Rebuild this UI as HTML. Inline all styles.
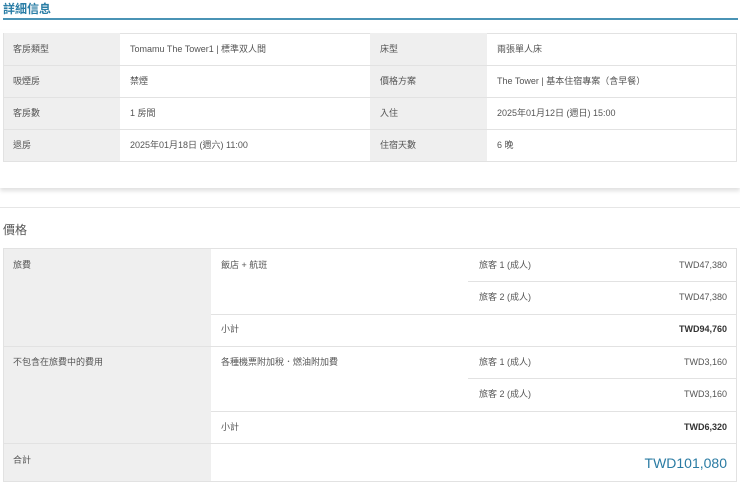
<!DOCTYPE html>
<html><head><meta charset="utf-8"><style>
body{margin:0;width:740px;height:485px;background:#fff;font-family:"Liberation Sans","Noto Sans CJK TC",sans-serif;font-size:9px;color:#555;position:relative;overflow:hidden}
div{position:absolute;box-sizing:border-box}
.g{background:#efefef}
.h{height:1px;background:#e2e2e2}
.v{width:1px;background:#e2e2e2}
.t{white-space:nowrap;line-height:11px}
.r{text-align:right}
</style></head><body>
<div class="t" style="left:3px;top:2px;font-size:12px;line-height:14px;color:#2b7ea6;font-weight:bold">詳細信息</div>
<div style="left:3px;top:18px;width:735px;height:2px;background:#4a93b5"></div>
<!-- card -->
<div style="left:0;top:30px;width:740px;height:158px;background:#fff;box-shadow:0 3px 4px rgba(0,0,0,0.12)"></div>
<div style="left:3px;top:33px;width:734px;height:129px;border:1px solid #e2e2e2;background:#fff"></div>
<div class="g" style="left:4px;top:33px;width:116px;height:129px"></div>
<div class="g" style="left:370px;top:33px;width:117px;height:129px"></div>
<div class="h" style="left:3px;top:65px;width:734px"></div>
<div class="h" style="left:3px;top:97px;width:734px"></div>
<div class="h" style="left:3px;top:129px;width:734px"></div>
<div class="h" style="left:3px;top:161px;width:734px"></div>
<div class="t" style="left:13px;top:44px">客房類型</div>
<div class="t" style="left:130px;top:44px">Tomamu The Tower1 | 標準双人間</div>
<div class="t" style="left:380px;top:44px">床型</div>
<div class="t" style="left:497px;top:44px">兩張單人床</div>
<div class="t" style="left:13px;top:76px">吸煙房</div>
<div class="t" style="left:130px;top:76px">禁煙</div>
<div class="t" style="left:380px;top:76px">價格方案</div>
<div class="t" style="left:497px;top:76px">The Tower | 基本住宿專案（含早餐）</div>
<div class="t" style="left:13px;top:108px">客房數</div>
<div class="t" style="left:130px;top:108px">1 房間</div>
<div class="t" style="left:380px;top:108px">入住</div>
<div class="t" style="left:497px;top:108px">2025年01月12日 (週日) 15:00</div>
<div class="t" style="left:13px;top:140px">退房</div>
<div class="t" style="left:130px;top:140px">2025年01月18日 (週六) 11:00</div>
<div class="t" style="left:380px;top:140px">住宿天數</div>
<div class="t" style="left:497px;top:140px">6 晚</div>
<div class="h" style="left:0;top:207px;width:740px;background:#e6e6e6"></div>
<div class="t" style="left:3px;top:223px;font-size:12px;line-height:14px;color:#555">價格</div>
<!-- price table -->
<div style="left:3px;top:248px;width:734px;height:234px;border:1px solid #e2e2e2"></div>
<div class="g" style="left:4px;top:249px;width:207px;height:232px"></div>
<div class="h" style="left:468px;top:281px;width:269px"></div>
<div class="h" style="left:211px;top:314px;width:526px"></div>
<div class="h" style="left:3px;top:346px;width:734px"></div>
<div class="h" style="left:468px;top:378px;width:269px"></div>
<div class="h" style="left:211px;top:411px;width:526px"></div>
<div class="h" style="left:3px;top:443px;width:734px"></div>
<div class="t" style="left:13px;top:260px">旅費</div>
<div class="t" style="left:221px;top:260px">飯店 + 航班</div>
<div class="t" style="left:479px;top:260px">旅客 1 (成人)</div>
<div class="t r" style="left:600px;width:127px;top:260px">TWD47,380</div>
<div class="t" style="left:479px;top:292px">旅客 2 (成人)</div>
<div class="t r" style="left:600px;width:127px;top:292px">TWD47,380</div>
<div class="t" style="left:221px;top:324px">小計</div>
<div class="t r" style="left:600px;width:127px;top:324px;color:#333;font-weight:bold">TWD94,760</div>
<div class="t" style="left:13px;top:357px">不包含在旅費中的費用</div>
<div class="t" style="left:221px;top:357px">各種機票附加稅．燃油附加費</div>
<div class="t" style="left:479px;top:357px">旅客 1 (成人)</div>
<div class="t r" style="left:600px;width:127px;top:357px">TWD3,160</div>
<div class="t" style="left:479px;top:389px">旅客 2 (成人)</div>
<div class="t r" style="left:600px;width:127px;top:389px">TWD3,160</div>
<div class="t" style="left:221px;top:422px">小計</div>
<div class="t r" style="left:600px;width:127px;top:422px;color:#333;font-weight:bold">TWD6,320</div>
<div class="t" style="left:13px;top:455px">合計</div>
<div class="t r" style="left:560px;width:167px;top:455px;font-size:14px;line-height:16px;color:#2a7ba3">TWD101,080</div>
</body></html>
